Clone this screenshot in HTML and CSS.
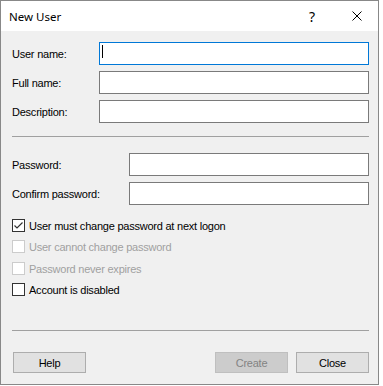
FILE: index.html
```html
<!DOCTYPE html>
<html lang="en">
<head>
    <meta charset="UTF-8">
    <title>New User</title>
    <link rel="stylesheet" href="styles.css">
</head>
<body>
    <div class="window">
        <div class="titlebar">
            <span class="title">New User</span>
            <span class="title-btn help-btn">?</span>
            <span class="title-btn close-btn">
                <svg width="10" height="10" viewBox="0 0 10 10"><path d="M0.5 0.5 L9.5 9.5 M9.5 0.5 L0.5 9.5" stroke="#000" stroke-width="1" fill="none"/></svg>
            </span>
        </div>

        <div class="content">
            <div class="fields names">
                <span class="label">User name:</span>
                <div class="textbox focused"><span class="caret"></span></div>
                <span class="label">Full name:</span>
                <div class="textbox"></div>
                <span class="label">Description:</span>
                <div class="textbox"></div>
            </div>

            <div class="separator sep-top"></div>

            <div class="fields passwords">
                <span class="label">Password:</span>
                <div class="textbox"></div>
                <span class="label">Confirm password:</span>
                <div class="textbox"></div>
            </div>

            <div class="checks">
                <div class="check">
                    <span class="box">
                        <svg width="11" height="11" viewBox="0 0 11 11"><path d="M1.5 5.5 L4 8 L9.5 2.5" stroke="#333" stroke-width="1.2" fill="none"/></svg>
                    </span>
                    User must change password at next logon
                </div>
                <div class="check disabled"><span class="box"></span>User cannot change password</div>
                <div class="check disabled"><span class="box"></span>Password never expires</div>
                <div class="check"><span class="box"></span>Account is disabled</div>
            </div>

            <div class="footer">
                <div class="separator"></div>
                <div class="buttons">
                    <button class="help">Help</button>
                    <button disabled>Create</button>
                    <button>Close</button>
                </div>
            </div>
        </div>
    </div>
</body>
</html>
```

FILE: styles.css
```css
body {
    margin: 0;
    background: #fff;
    font-family: "Liberation Sans", Arial, sans-serif;
    font-size: 11px;
    color: #000;
}

.window {
    width: 379px;
    height: 385px;
    box-sizing: border-box;
    border: 1px solid #888;
    background: #f0f0f0;
    display: flex;
    flex-direction: column;
}

/* Title bar */
.titlebar {
    height: 30px;
    background: #fff;
    display: flex;
    align-items: center;
}

.title {
    flex: 1;
    padding-left: 8px;
    font-family: "Noto Sans", sans-serif;
    font-size: 11.5px;
}

.title-btn {
    height: 30px;
    display: flex;
    align-items: center;
    justify-content: center;
}

.help-btn {
    width: 48px;
    font-family: "Noto Sans", sans-serif;
    font-size: 14px;
}

.close-btn {
    width: 42px;
}

/* Content */
.content {
    flex: 1;
    padding: 11px 9px 11px 11px;
    display: flex;
    flex-direction: column;
    letter-spacing: -0.23px;
}

.fields {
    display: grid;
    grid-auto-rows: 23px;
    row-gap: 6px;
    align-items: center;
}

.names {
    grid-template-columns: 87px 1fr;
}

.passwords {
    grid-template-columns: 117px 1fr;
}

.textbox {
    height: 23px;
    box-sizing: border-box;
    border: 1px solid #7a7a7a;
    background: #fff;
}

.textbox.focused {
    border-color: #0078d7;
}

.caret {
    display: block;
    width: 1px;
    height: 13px;
    margin: 2px 0 0 2px;
    background: #000;
}

.separator {
    height: 1px;
    background: #a0a0a0;
}

.sep-top {
    margin: 13px 0 16px;
}

/* Checkboxes */
.checks {
    margin-top: 10px;
}

.check {
    height: 21px;
    display: flex;
    align-items: center;
}

.check:nth-child(3) {
    margin-top: 1px;
}

.box {
    width: 13px;
    height: 13px;
    box-sizing: border-box;
    border: 1px solid #333;
    background: #fff;
    margin-right: 4px;
    display: flex;
    align-items: center;
    justify-content: center;
}

.check.disabled {
    color: #a0a0a0;
}

.check.disabled .box {
    border-color: #ccc;
}

/* Footer */
.footer {
    margin-top: auto;
}

.buttons {
    margin-top: 21px;
    display: flex;
    gap: 8px;
}

button {
    width: 73px;
    height: 21px;
    padding: 0;
    background: #e1e1e1;
    border: 1px solid #adadad;
    font-family: "Liberation Sans", Arial, sans-serif;
    font-size: 11px;
    letter-spacing: -0.23px;
    color: #000;
}

button.help {
    margin-left: 1px;
    margin-right: auto;
}

button:disabled {
    background: #ccc;
    border-color: #bfbfbf;
    color: #838383;
}
```
